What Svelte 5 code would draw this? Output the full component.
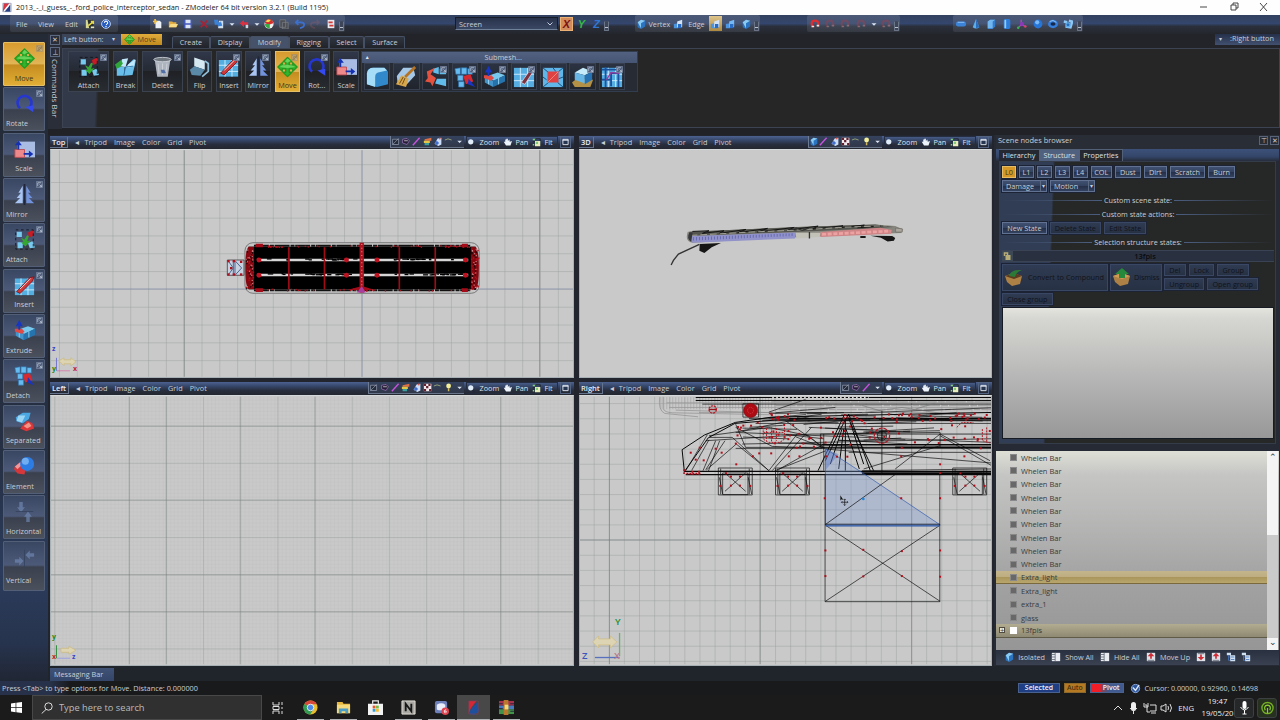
<script>
  const sideTools = [
    { label: 'Move', icon: 'move', active: true, menu: true, center: true },
    { label: 'Rotate', icon: 'rotate', menu: true },
    { label: 'Scale', icon: 'scale', center: true },
    { label: 'Mirror', icon: 'mirror', menu: true },
    { label: 'Attach', icon: 'attach', menu: true },
    { label: 'Insert', icon: 'insert', menu: true, center: true },
    { label: 'Extrude', icon: 'extrude', menu: true },
    { label: 'Detach', icon: 'detach', menu: true },
    { label: 'Separated', icon: 'separated' },
    { label: 'Element', icon: 'element' },
    { label: 'Horizontal', icon: 'horizontal' },
    { label: 'Vertical', icon: 'vertical' }
  ];

  const ribbonTools = [
    { label: 'Attach', icon: 'attach', wide: true, menu: true },
    { label: 'Break', icon: 'break' },
    { label: 'Delete', icon: 'delete', wide: true, menu: true },
    { label: 'Flip', icon: 'flip' },
    { label: 'Insert', icon: 'insert', menu: true },
    { label: 'Mirror', icon: 'mirror', menu: true },
    { label: 'Move', icon: 'move', menu: true, active: true },
    { label: 'Rot...', icon: 'rotate', menu: true },
    { label: 'Scale', icon: 'scale' }
  ];

  const submesh = ['bevel', 'brush', 'bridge', 'detach', 'extrude', 'knife', 'fill', 'box', 'path'];
  const tabs = ['Create', 'Display', 'Modify', 'Rigging', 'Select', 'Surface'];
  const viewMenus = ['Tripod', 'Image', 'Color', 'Grid', 'Pivot'];

  const fileIcons = ['new', 'open', 'save', 'cross', 'import', 'caret', 'export', 'caret', 'ball', 'paste', 'undo', 'redo', 'log'];
  const magnets = ['magnet', 'magnetoff', 'magnetoff', 'magnetoff', 'caret', 'magnetoff'];
  const primitives = ['plate', 'cone', 'cube', 'cylinder', 'joint', 'sphere', 'torus', 'knot'];

  const views = [
    { name: 'Top', icons: ['wire', 'solid', 'line', 'tex', 'drop', 'hook', 'down'] },
    { name: '3D', icons: ['cubes', 'line', 'drop', 'check', 'hook', 'bulb', 'down'] },
    { name: 'Left', icons: ['wire', 'solid', 'line', 'tex', 'drop', 'check', 'hook', 'bulb', 'down'] },
    { name: 'Right', icons: ['wire', 'solid', 'line', 'down'] }
  ];

  const levels = ['L0', 'L1', 'L2', 'L3', 'L4', 'COL', 'Dust', 'Dirt', 'Scratch', 'Burn'];
  const nodes = [
    ...Array(9).fill('Whelen Bar'),
    'Extra_light',
    'Extra_light',
    'extra_1',
    'glass',
    '13fpis'
  ];

  const apps = ['chrome', 'folder', 'store', 'notes', 'discord', 'zmodeler', 'winrar'];

  let seed = 7;
  function rnd(a, b) {
    seed = (seed * 16807) % 2147483647;
    return a + ((seed - 1) / 2147483646) * (b - a);
  }

  function steps(from, to, size) {
    const out = [];
    for (let v = from; v < to; v += size) out.push(v);
    return out;
  }

  function scatter(n, x1, x2, y1, y2) {
    return Array.from({ length: n }, () => [rnd(x1, x2), rnd(y1, y2)]);
  }

  // vertex dots of the light bar, top view
  const barDots = [
    ...scatter(36, 76, 98, 55, 180),
    ...scatter(36, 752, 774, 55, 180),
    ...scatter(28, 100, 750, 45, 50),
    ...scatter(28, 100, 750, 176, 181),
    ...scatter(16, 120, 185, 45, 50),
    ...scatter(16, 660, 735, 45, 50),
    ...scatter(14, 385, 460, 175, 182)
  ];
  const endDots = [...scatter(22, 76, 96, 55, 175), ...scatter(22, 754, 770, 55, 175)];
  const gaps = [...scatter(16, 130, 400, 86, 90), ...scatter(16, 130, 400, 131, 135), ...scatter(16, 500, 720, 87, 90), ...scatter(16, 500, 720, 132, 135)];

  // housing of the light bar, side view
  const hull = [
    ...scatter(32, 470, 740, 110, 200),
    ...scatter(44, 740, 1250, 100, 200)
  ];
  const hullLines = Array.from({ length: 24 }, () => {
    const x = rnd(470, 1050);
    const y = rnd(104, 190);
    return [x, y, x + rnd(90, 220), y + rnd(-14, 14)];
  });
  const roofLines = Array.from({ length: 16 }, () => {
    const x = rnd(570, 1080);
    const y = rnd(94, 124);
    return [x, y, x + rnd(60, 200), y + rnd(-10, 10)];
  });
  const roofDots = scatter(40, 580, 1245, 95, 118);
  const ghostLines = steps(255, 600, 9);
  const brackets = [428, 600, 1133];
  const faceDots = [
    [748, 353], [978, 353], [1095, 353], [750, 510], [864, 508], [980, 512], [1095, 510],
    [750, 587], [864, 588], [980, 587], [1095, 589], [345, 216], [372, 201], [420, 204], [438, 216],
    [360, 237], [384, 239], [482, 251], [532, 227], [551, 218], [587, 218], [640, 227], [672, 227],
    [752, 227], [785, 228], [816, 228], [978, 227], [1095, 251], [1095, 277], [1168, 227]
  ];
</script>

{#snippet glyph(name)}
  <svg class="glyph" viewBox="0 0 24 24">
    {#if name === 'move'}
      <path d="M12 1l5 5h-3v4h4V7l5 5-5 5v-3h-4v4h3l-5 5-5-5h3v-4H6v3l-5-5 5-5v3h4V6H7z" fill="#32b52c" stroke="#249a20" stroke-width="1.500" stroke-linejoin="round" />
      <path d="M12 2l4 3-4 2-3-1zM3 12l4-3 10 1 4 2-9 1z" fill="#8ce879" opacity=".6" />
    {:else if name === 'rotate'}
      <path d="M7 17.500A8 8 0 1 1 18.500 16" fill="none" stroke="#2637d0" stroke-width="3" />
      <path d="M13 16l9-2v8z" fill="#3449ee" />
    {:else if name === 'scale'}
      <path d="M4 3h20v18H4z" fill="#a9bde4" />
      <path d="M1 12h11v9H1z" fill="#ed898a" stroke="#b84850" />
      <path d="M5 12V6M11 17h7" stroke="#1a2fab" stroke-width="2" />
      <path d="M5 2l4 5H1zM17 13v8l5-4z" fill="#1430b5" />
    {:else if name === 'mirror'}
      <path d="M10 2v20H1l6-6H3l5-6H5z" fill="#a8c4f2" />
      <path d="M14 2v20h9l-6-6h4l-5-6h3z" fill="#7292db" />
      <path d="M12 0v24" stroke="#20273b" stroke-width="2" />
    {:else if name === 'attach'}
      <path d="M3 3h6v6H3zM4 15h6v7H4zM16 16l5-2 3 7-6 1z" fill="#77c9ee" />
      <path d="M16 4l6-3 1 6-6 3z" fill="#c91b25" />
      <path d="M8 10l4 2 3-5 2 1-2 6 4-1-6 7-5-5h3z" fill="#36a633" />
      <path d="M2 1h20v22H2z" fill="none" stroke="#10151e" stroke-dasharray="3 3" />
    {:else if name === 'break'}
      <path d="M2 11l9 1-1 10H2zM12 12l9-9 3 1-4 17-10 1z" fill="#69bde9" />
      <path d="M8 3l7-1-3 10-7-1zM15 9l8-6-1 8-8 2z" fill="#c1e9fb" />
      <path d="M0 9l7-5 2 4-3 4-4 2z" fill="#30a63a" />
      <path d="M12 12l-2 10M13 12l8-1" stroke="#2570a8" />
    {:else if name === 'delete'}
      <path d="M3 3h18l-3 20H6z" fill="#aeb4bd" />
      <ellipse cx="12" cy="3.500" rx="10" ry="2.500" fill="#70777f" stroke="#d0d4db" />
      <path d="M7 8l1 12M12 8v13M17 8l-1 12" stroke="#e3e7ed" opacity=".6" />
      <path d="M10 15l4 0 2 4h-5z" fill="#526fa8" />
    {:else if name === 'flip'}
      <path d="M6 1l12 4v10L6 11z" fill="#d6e8f2" />
      <path d="M1 15l5-4 12 4-5 7-10-1z" fill="#5b8aa9" />
      <path d="M18 5l4 3v9l-7 6" fill="none" stroke="#92bfda" stroke-width="2" />
    {:else if name === 'insert'}
      <path d="M1 4h22v19H1z" fill="#54aee0" />
      <path d="M8 4v19M16 4v19M1 10h22M1 17h22" stroke="#d6f2ff" />
      <path d="M3 19L18 3l5-1-2 5L7 21z" fill="#d03737" stroke="#7c1720" />
      <path d="M7 16L19 4" stroke="#eee" />
    {:else if name === 'extrude'}
      <path d="M2 12l14-5 8 3-12 6z" fill="#78c9ed" />
      <path d="M11 16l13-6v7l-13 6z" fill="#2674ae" />
      <path d="M2 12l9 4v7l-9-5z" fill="#4294cb" />
      <path d="M17 13v7M6 14v6" stroke="#9ad4f2" />
      <path d="M1 10h8l3 3-3 3-8-3z" fill="#df4a45" />
      <path d="M5 11V7H2l4-7 4 7H7v4z" fill="#1736c3" />
    {:else if name === 'detach'}
      <path d="M1 3l6-1v7H2zM8 2h6v7H8zM15 3l5 0v6h-5zM4 10h6v6H4zM5 17h6v6H5z" fill="#65baf0" stroke="#2c6fa8" stroke-width=".7" />
      <path d="M10 11l8-2 3 8-8 3z" fill="#d62930" />
      <path d="M16 14l7 9-8-3" fill="#1a35c2" />
    {:else if name === 'separated'}
      <path d="M2 7l8-5 9 0-2 7-7 5-7-2z" fill="#4aa7e1" />
      <path d="M5 5l8 0-4 8-6-2z" fill="#9bd5f6" />
      <path d="M7 20l8-9 6 3 2 6-9 3z" fill="#dc3638" />
      <path d="M11 17l6-4 3 4-5 3z" fill="#f39489" />
    {:else if name === 'element'}
      <path d="M1 12l6-5 7 3-2 11-8-1-4-5z" fill="#d6373b" />
      <path d="M1 12l6-5 2 3-5 5z" fill="#f0989a" />
      <circle cx="15" cy="9" r="8" fill="#2c7ce4" />
      <circle cx="13" cy="6" r="4" fill="#83baf4" opacity=".8" />
    {:else if name === 'horizontal'}
      <path d="M6 1h4v6h2.500L8 13 3.500 7H6zM14 24h4v-6h2.500L16 12l-4.500 6H14z" fill="#718bb6" opacity=".65" />
      <path d="M2 12h20" stroke="#35445f" />
    {:else if name === 'vertical'}
      <path d="M1 14h5v-3l5 5-5 5v-3H1zM23 7h-5V4l-5 5 5 5v-3h5z" fill="#718bb6" opacity=".65" />
      <path d="M12 3v20" stroke="#35445f" />
    {:else if name === 'bevel'}
      <path d="M1 8Q2 2 8 2h12l4 4v14l-12 3-11-3z" fill="#3189cc" />
      <path d="M1 8Q2 2 8 2h12l3 3-10 2q-3 1-3 5v11l-9-3z" fill="#a5ddf8" />
    {:else if name === 'brush'}
      <path d="M2 11l7-9h11l2 8-9 10H3z" fill="#a6c8e8" />
      <path d="M22 1L11 12" stroke="#b47426" stroke-width="3" />
      <path d="M7 10l8 4-3 9-11-3z" fill="#d8a84c" />
      <path d="M5 19l4-7M8 20l3-7" stroke="#684417" />
    {:else if name === 'bridge'}
      <path d="M9 3l6-2v8l-6-2zM16 3l7 0v6h-7zM13 14h10v8l-12-3z" fill="#62bceb" />
      <path d="M2 6l9-4-5 7 6 4-4 9-2-4-6-1 3-4z" fill="#e4523f" />
    {:else if name === 'knife' || name === 'path'}
      <path d="M1 2h22v21H1z" fill="#55ade2" />
      <path d="M8 2v21M16 2v21M1 9h22M1 16h22" stroke="#d1eeff" />
      {#if name === 'knife'}
        <path d="M9 18L21 1l3 2-11 17z" fill="#7b3341" stroke="#eee" stroke-width=".7" />
      {:else}
        <path d="M1 4h22M5 1v22M11 22V8h8v15M1 15h10" stroke="#19529e" stroke-width="2" fill="none" />
        <path d="M6 15l5-8 9 1" stroke="#9b3ca0" fill="none" stroke-width="1.500" />
      {/if}
    {:else if name === 'fill'}
      <path d="M1 2h22v21H1z" fill="#60b6e8" />
      <path d="M1 2l6 5M23 2l-6 5M1 23l6-5M23 23l-6-5M12 2l3 4M1 12l4 3M23 12l-5 2" stroke="#134d7c" />
      <path d="M6 6h12v12H6z" fill="#e04142" />
      <path d="M6 18L18 6" stroke="#f28e82" />
    {:else if name === 'box'}
      <path d="M0 18l5-4 18 1-3 8H3z" fill="#b29046" />
      <path d="M3 7l9-5 10 4-8 4z" fill="#c5ebfb" />
      <path d="M3 7l11 3v9L3 15z" fill="#68b6e5" />
      <path d="M14 10l8-4v9l-8 5z" fill="#2571b2" />
    {/if}
  </svg>
{/snippet}

{#snippet mini(name)}
  <svg class="mini" viewBox="0 0 12 12">
    {#if name === 'new'}
      <path d="M3 2h5l2 2v7H3z" fill="#ecf2f8" /><path d="M0 3h5M2.500 0v6" stroke="#f4c24b" stroke-width="2" />
    {:else if name === 'open'}
      <path d="M1 3h4l1 1h4v6H1z" fill="#e2ad42" /><path d="M3 6h9l-2 4H1z" fill="#f9db83" />
    {:else if name === 'save'}
      <path d="M1 1h10v10H1z" fill="#4356b9" /><path d="M3 1h6v4H3zM3 7h6v4H3z" fill="#dce4f4" />
    {:else if name === 'cross'}
      <path d="M2 2l8 8M10 2L2 10" stroke="#a52334" stroke-width="2" />
    {:else if name === 'import'}
      <path d="M6 2h5v9H5V8z" fill="#cfddec" /><path d="M0 1h5v3h3V2l2 6-6 1 1-2H1z" fill="#3b83d8" />
    {:else if name === 'export'}
      <path d="M1 5l5-4v3h5v5H8V7H6v3z" fill="#dc3140" /><path d="M8 7h3v4H8z" fill="#ccd7e5" />
    {:else if name === 'ball'}
      <circle cx="6" cy="6" r="5.500" fill="#eee" /><path d="M1 5a5 5 0 0 1 10 0L6 7z" fill="#d3312f" /><path d="M1 6l6 0v5a5 5 0 0 1-6-5" fill="#36ac43" /><path d="M2 3q3-4 6-1L5 4z" fill="#f7df54" />
    {:else if name === 'paste'}
      <path d="M1 1h7v9H1zM4 4h7v8H4z" fill="#4b4d52" stroke="#777b83" />
    {:else if name === 'undo'}
      <path d="M1 4h6q4 0 4 3t-5 4M4 1L1 4l3 3" fill="none" stroke="#3c70cf" stroke-width="2" />
    {:else if name === 'redo'}
      <path class="off" d="M11 4H5Q1 4 1 7t5 4M8 1l3 3-3 3" fill="none" stroke="#b0606a" stroke-width="2" />
    {:else if name === 'log'}
      <path d="M2 1h8v10H2z" fill="#e6e9f0" /><path d="M3 4h5M4 8h5" stroke="#d03c35" stroke-width="2" />
    {:else if name === 'caret' || name === 'down'}
      <path d="M3 5h6L6 8z" fill="#dce4f2" />
    {:else if name === 'exit'}
      <path d="M1 1h7v10H1z" fill="#d7d992" /><path d="M3 1h7v10H5z" fill="#2a3031" /><path d="M4 8l5-4M7 3h3v3" stroke="#e8db4b" fill="none" stroke-width="1.800" /><path d="M7 9h4v2H7z" fill="#e3e7c4" />
    {:else if name === 'help'}
      <circle cx="6" cy="6" r="5.300" fill="#245cc2" stroke="#d0e1fc" /><path d="M4 4.500q.5-2 2-2t2 1.500-2 3" stroke="#fff" fill="none" stroke-width="1.300" /><circle cx="6" cy="9" r=".8" fill="#fff" />
    {:else if name === 'magnet' || name === 'magnetoff'}
      <path class:off={name === 'magnetoff'} d="M3 10L2 6q0-4 4-4t4 4v3" fill="none" stroke="#da2f33" stroke-width="2.700" />
      <path class:off={name === 'magnetoff'} d="M2 9h3M8 8h3" stroke="#f1e6e6" stroke-width="2" />
    {:else if name === 'plate'}
      <rect x="0" y="3" width="12" height="6" rx="2.500" fill="#3b84da" /><path d="M2 4h8" stroke="#93c5f6" />
    {:else if name === 'cone'}
      <path d="M6 0l4 10q-4 3-8 0z" fill="#5caeea" /><path d="M6 0l4 10-4 1z" fill="#2b6dbb" />
    {:else if name === 'cube'}
      <path d="M2 3l3-2h6v8l-3 3H2z" fill="#337bcb" /><path d="M2 3l3-2h6L8 3v8H2z" fill="#72b6f0" />
    {:else if name === 'cylinder'}
      <rect x="2" y="0" width="8" height="12" rx="2" fill="#2d7dda" /><path d="M4 1v10" stroke="#9accfa" stroke-width="2" />
    {:else if name === 'joint'}
      <path d="M5 1v6l-4 4M5 7l6 2" stroke="#b24dbf" stroke-width="1.500" fill="none" /><circle cx="6" cy="6" r="2.500" fill="#8b38ba" /><circle cx="1.500" cy="10.500" r="1.500" fill="#32b551" /><circle cx="10" cy="9" r="1.500" fill="#d84564" />
    {:else if name === 'sphere'}
      <circle cx="6" cy="6" r="5.300" fill="#2875d8" /><circle cx="5" cy="4" r="2.500" fill="#7ab9f6" />
    {:else if name === 'torus'}
      <ellipse cx="6" cy="6" rx="4.500" ry="3.500" fill="#17294b" stroke="#367edb" stroke-width="3" /><path d="M2 3q4-3 8 1" stroke="#9bcbf6" fill="none" />
    {:else if name === 'knot'}
      <path d="M1 3l4 1M3 9l6 1 2-7-4-1" stroke="#8cc7f5" stroke-width="3" fill="none" /><circle cx="6" cy="7" r="2.500" fill="#276bbb" stroke="#60adeb" stroke-width="1.500" />
    {:else if name === 'points' || name === 'faces'}
      <path d="M1 6l5-1v6H1z" fill="#4b94e0" /><path d="M5 3l6-2v9H5z" fill={name === 'faces' ? '#74b9f5' : '#d2e2f4'} /><path d="M6 6h4v5H6z" fill="#276bc4" />
    {:else if name === 'solidcube' || name === 'cubes'}
      <path d="M2 4l4-3 5 1v7l-5 3-4-2z" fill="#2b74c2" /><path d="M2 4l4-3 5 1-5 3v6z" fill="#8bcaf1" />
    {:else if name === 'wire'}
      <path d="M2 3h8v7H2zM2 10l8-8" fill="#242b3a" stroke="#aab4c8" stroke-width=".8" />
    {:else if name === 'solid'}
      <path d="M2 3l6-1 3 3-3 5-6-2z" fill="#251c36" stroke="#a479c2" stroke-width=".9" /><path d="M4 5h5" stroke="#ddd" />
    {:else if name === 'line'}
      <path d="M1 11L10 1" stroke="#c752dd" stroke-width="1.800" />
    {:else if name === 'tex'}
      <path d="M2 3l9-2v4H2z" fill="#df7044" /><path d="M1 5h8v3H1z" fill="#e1c647" /><path d="M2 8h6v3H2z" fill="#3b9e9b" />
    {:else if name === 'drop'}
      <path d="M6 2l5-1v9l-4 2-5-3z" fill="#cddcf8" /><path d="M5 5l3 3-3 3-3-3z" fill="#426fcb" /><circle cx="9" cy="2" r="1.200" fill="#de5548" />
    {:else if name === 'hook'}
      <path d="M1 4q4-3 9 0" stroke="#949d75" fill="none" stroke-width="1.300" />
    {:else if name === 'check'}
      <path d="M1 1h10v10H1z" fill="#f1e9ee" /><path d="M1 1h3v3H1zM7 1h3v3H7zM4 4h3v3H4zM1 8h3v3H1zM8 8h3v3H8z" fill="#62212f" />
    {:else if name === 'bulb'}
      <circle cx="6" cy="4" r="3.200" fill="#f4f09a" /><path d="M5 7h2v4H5z" fill="#d4b95c" />
    {:else if name === 'lens'}
      <path d="M6 7l4 4" stroke="#222838" stroke-width="2" /><circle cx="5" cy="5" r="3.500" fill="#e0ecf8" />
    {:else if name === 'hand'}
      <path d="M1 5l2 0 0-3h1.500l0 2 0-3h2v3l2-2 .5 3 3-1-2 6H4z" fill="#edf3fa" />
    {:else if name === 'fit'}
      <path d="M4 4h7v7H4z" fill="#e6ecbc" /><path d="M1 1h3v2H1zM1 8h2v2H1zM5 5h3v3H5z" fill="#81cb79" /><path d="M5 1h6v3M1 5h3" stroke="#1a1d1c" fill="none" />
    {:else if name === 'max'}
      <path d="M1.500 1.500h9v9h-9zM1 3h10" fill="#273650" stroke="#e8eef8" stroke-width="1.500" />
    {:else if name === 'page'}
      <path d="M1 1h10v10H1z" fill="#e9edf2" /><path d="M1 3h4M1 6h4M1 9h4M5 1v10" stroke="#666d78" />
    {:else if name === 'up' || name === 'dn' || name === 'top'}
      <path d="M1 1h10v10H1z" fill="#dde1e8" /><path d={name === 'dn' ? 'M6 10L2 6h3V3h2v3h3z' : 'M6 1L2 5h3v3h2V5h3z'} fill="#cf2c36" /><path d={name === 'dn' ? 'M2 2h8' : 'M2 10h8'} stroke="#5a6270" />
    {:else if name === 'tree'}
      <path d="M1 1h5v3H1zM5 4h6v7H5z" fill="#d1e1f4" /><path d="M3 4v6h2M3 6h2M6 6h4M6 9h4" stroke="#4676be" fill="none" />
    {/if}
  </svg>
{/snippet}

{#snippet dots(list, size, fill = '#b0101c')}
  {#each list as [x, y]}
    <rect {x} {y} width={size} height={size} {fill} stroke="none" />
  {/each}
{/snippet}

{#snippet corner()}
  <svg class="corner" viewBox="0 0 8 8"><path d="M.5.5h7v7h-7z" fill="#4a5977" stroke="#7f8da6" stroke-width=".8" /><path d="M2 6V2h4M4 4l2.500 2.500M6.500 4v2.500H4" fill="none" stroke="#ccd4e0" stroke-width=".8" /></svg>
{/snippet}

{#snippet topScene()}
  <svg class="scene" viewBox="50 150 523 227">
    {#each steps(58.5, 573, 17.85) as x}<path d="M{x} 150V377" class="grid" />{/each}
    {#each steps(164.5, 377, 17.85) as y}<path d="M50 {y}H573" class="grid" />{/each}
    <path d="M183.500 150V377M539.500 150V377" class="major" />
    <path d="M361.500 150V377M50 289H573" stroke="#858dab" stroke-width=".7" />
    <g transform="translate(220 230) scale(.33333)">
      <rect x="73" y="38" width="704" height="152" rx="24" fill="#c7c7c7" stroke="#777" stroke-width="3" />
      <rect x="84" y="50" width="682" height="128" fill="#000" />
      <path d="M100 47H750M100 181H750" stroke="#111" stroke-width="6" stroke-dasharray="45 3 12 2" />
      <path d="M110 90H744M110 135H744" stroke="#d5d5d5" stroke-width="7" />
      {#each gaps as [x, y]}<path d="M{x} {y}h{x % 13 + 5}" stroke="#000" stroke-width="4" />{/each}
      <path d="M84 50q-10 8-10 64t10 64h16V50zM766 50q10 8 10 64t-10 64h-14V50z" fill="#850811" />
      <path d="M205 52v126M312 52v126M537 52v126M645 52v126" stroke="#a00c16" stroke-width="5" />
      <path d="M424 38v150" stroke="#aa1420" stroke-width="13" />
      <path d="M424 42v140" stroke="#d17777" stroke-width="4" stroke-dasharray="3 8" />
      {#each [115, 378, 470, 736] as cx}
        <circle {cx} cy="90" r="7.500" fill="#bd1220" /><circle {cx} cy="136" r="7.500" fill="#bd1220" />
      {/each}
      {@render dots(barDots, 4)}
      {@render dots(endDots, 3, '#d9a3a5')}
      {@render dots(endDots.map(([x, y]) => [x - 2, y + 5]), 4, '#1c0406')}
      <path d="M105 41h22v11h-22zM105 175h22v11h-22zM725 41h18v11h-18zM725 175h18v11h-18zM380 180l45-12 38 12z" fill="#a30c18" />
      <path d="M20 90h50v46H20z" fill="#c7d1df" stroke="#222" stroke-width="2" />
      <path d="M22 92l16 22-16 22M38 92v44M43 92l20 22-20 22z" fill="none" stroke="#4d658f" stroke-width="3" />
      {@render dots([[20, 90], [36, 90], [20, 130], [36, 130], [28, 111], [58, 92], [58, 130]], 7)}
      <path d="M410 188l14-20 12 20z" fill="#a83d9f" />
    </g>
    <path d="M55.500 358v13" stroke="#7477cc" /><path d="M56 371h13" stroke="#d28" opacity=".4" />
    <path d="M58 361l5-3v2h7v-2l5 4-5 4v-2h-7v2z" class="gizmo" />
    <text x="51" y="351" fill="#3545c8">z</text><text x="51" y="371" fill="#168a24">y</text><text x="72" y="371" fill="#c02530">x</text>
  </svg>
{/snippet}

{#snippet perspectiveScene()}
  <svg class="scene" viewBox="579 150 412 227">
    <g transform="translate(640 130) scale(.33333)">
      <path d="M145 305l320-14 240-8 60 5 24 10-6 11-78 3-320 13-230 13q-24-3-14-33z" fill="#86867e" />
      <path d="M146 305l330-14 229-8 55 8-80 5-205 9-330 13z" fill="#55554f" />
      <path d="M154 318l310-11v18l-310 13z" fill="#9092c9" />
      <path d="M157 329l305-14M157 324l305-12" stroke="#5359a7" stroke-width="5" stroke-dasharray="2 7" />
      <path d="M540 306l180-13 35 7-3 11-212 10z" fill="#cf8587" />
      <path d="M545 313l205-10" stroke="#eda2a2" stroke-width="8" stroke-dasharray="12 5" />
      <path d="M155 304l50-2-20 8 65-8-14 8 80-12-25 10 90-13-30 11 110-14-18 8 90-12-18 9 93-10-15 6 79-8-20 8 70-5" stroke="#151515" stroke-width="3" fill="none" />
      <path d="M150 316l180-10 140-6 150-9 120-4" stroke="#a1a196" stroke-width="3" fill="none" stroke-dasharray="20 9" />
      <path d="M465 308h75l-2 13-70 4z" fill="#c2c2b9" /><path d="M507 306v19M465 293l20 8 20-7" stroke="#333" stroke-width="4" fill="none" />
      <path d="M766 294l20 2v10h-20z" fill="#aaa69e" stroke="#6b6860" stroke-width="2" />
      <path d="M146 307q-10 18 5 28l5-28z" fill="#35373b" /><path d="M177 342l64-3-28 13-22 17-15-7z" fill="#161616" />
      <path d="M176 343l-63 29-15 19-7 14" fill="none" stroke="#333" stroke-width="4" />
      <path d="M690 317l66 1 9 6-4 8-19 2-20-11zM660 318h16v6h-16z" fill="#171717" />
    </g>
  </svg>
{/snippet}

{#snippet leftScene()}
  <svg class="scene" viewBox="50 396 523 268">
    {#each steps(50.5, 573, 3.73) as x}<path d="M{x} 396V664" class="fine" />{/each}
    {#each steps(399.5, 664, 3.73) as y}<path d="M50 {y}H573" class="fine" />{/each}
    {#each steps(53.8, 573, 37.25) as x}<path d="M{x} 396V664" class="grid" />{/each}
    {#each steps(425.4, 664, 37.2) as y}<path d="M50 {y}H573" class="grid" />{/each}
    <path d="M128.500 396V664M165.500 396V664M239.500 396V664M314.500 396V664M500.500 396V664M50 425.500H573M50 499.500H573M50 574.500H573M50 611.500H573" class="major thin" />
    <path d="M55.500 645v13" stroke="#359043" /><path d="M56 658h13" stroke="#9ba0df" />
    <path d="M60 648h8v-2l7 4-7 4v-2h-8z" class="gizmo" />
    <text x="51" y="639" fill="#168a24">y</text><text x="51" y="659" fill="#c02530">x</text><text x="71" y="659" fill="#3545c8">z</text>
  </svg>
{/snippet}

{#snippet rightScene()}
  <svg class="scene" viewBox="579 396 412 268">
    {#each steps(593.2, 991, 15.15) as x}<path d="M{x} 396V664" class="grid" />{/each}
    {#each steps(402.8, 664, 15.2) as y}<path d="M579 {y}H991" class="grid" />{/each}
    <path d="M608.500 396V664M759.500 396V664M911.500 396V664M579 539.500H991" class="major" />
    <g transform="translate(575 380) scale(.33333)" fill="none" stroke="#080808" stroke-width="2">
      <path d="M252 48q-6 40 15 50l100 10M262 48v35q4 12 28 13l300 6M272 66h980M280 80h970M370 95h880M300 88l300 8" stroke="#8d8d8d" />
      {#each ghostLines as x}<path d="M{x} 49v36" stroke="#999" stroke-width="1.500" />{/each}
      <path d="M590 64h660M600 74h650M610 86h640" stroke="#a2a2a2" stroke-width="5" stroke-dasharray="60 4 20 3" />
      <path d="M360 50h890M360 59h890" stroke-width="3" /><path d="M590 50h290" stroke="#ddd" stroke-width="4" stroke-dasharray="5 7" />
      <path d="M580 94l110-38M600 96l180-16M380 70h870M580 98l310-3 360-14" />
      <path d="M840 68l120 35 120-36M860 96l120-16 120 18" stroke="#777" />
      <path d="M326 275l-7-68 67-44 93-38 110-16 660-14M328 270l70-99 80-43 120-10h650" stroke-width="3" />
      <path d="M400 170h70l110 100M395 162l-65 108M400 177l-52 92M420 180l-38 90M432 180l-34 92M448 180l-58 87M482 190l-90 78M482 190l98 80M580 270l85-110M590 270l118-130M610 266l138-77M598 270l154-60" />
      <path d="M400 165l180-25 120 25 45 40M480 140l110 57 150 6M480 130l30 70h720M390 180l320-20h540M480 155l770 30M500 190l750-16M580 112h670M560 120h690M540 128h710M500 150l200-42M630 120l115 80M660 168l90 35M480 203h770M745 160v110M735 160v40h360v-45zM920 90v190" />
      {#each [...hullLines, ...roofLines] as [x1, y1, x2, y2]}<path d="M{x1} {y1}L{x2} {y2}" />{/each}
      <path d="M740 192h510M960 200h290M640 114h610" stroke-width="5" />
      <path d="M750 240l45-95 25-45 30 75 35 95M765 250l35-105M790 265l15-120M810 270V120M852 265l-40-120M865 250l-45-140M895 270l-68-140M728 270l80-170" stroke-width="3" />
      <path d="M750 205l500 42M820 215h430M960 265l135-105 150 80M1095 165l155 90M860 270l390-5M865 265l230-70" />
      <path d="M326 272h924M330 282h920" stroke-width="4" />
      <path d="M860 278h390" stroke-width="7" />
      <path d="M750 204l115 75 230 154H750z" fill="rgba(125,155,215,.35)" stroke="#2e58ad" />
      <path d="M750 204v65l40-48z" fill="rgba(65,100,190,.35)" stroke="none" />
      <path d="M749 280v384h345V275M750 434l345 229M750 663l345-229M750 432L962 280M750 431h344" />
      <path d="M750 436h344" stroke="#2857aa" stroke-width="4" />
      {#each brackets as x}
        <path d="M{x} 262h102v81H{x}zM{x + 7} 264v77M{x + 13} 277h76v65h-76zM{x + 93} 264v77M{x + 20} 277l62 55M{x + 20} 332l62-55M{x} 272h102M{x + 3} 290l10 50M{x + 90} 290l10 50" />
        {@render dots([[x + 35, 285], [x + 62, 285], [x + 35, 312], [x + 62, 312], [x + 3, 313], [x + 93, 313], [x + 20, 275]], 6)}
      {/each}
      {@render dots(hull, 6)}
      {@render dots(roofDots, 6)}
      {@render dots(faceDots.map(([x, y]) => [x - 3, y - 3]), 6)}
      <path d="M502 69h47v40h-47z" />
      <circle cx="525" cy="89" r="21" fill="#ae0c15" stroke="#7e0a10" /><circle cx="525" cy="89" r="9" stroke="#e15b5b" stroke-dasharray="3 3" />
      <circle cx="411" cy="86" r="11" stroke="#b3202b" stroke-width="4" stroke-dasharray="7 2" /><path d="M400 86h22" stroke="#9b111a" stroke-width="4" />
      <circle cx="920" cy="165" r="23" stroke="#a81e29" stroke-width="4" stroke-dasharray="12 2" /><circle cx="920" cy="165" r="14" stroke="#111" /><path d="M906 165h28M920 151v28" />
      <path d="M563 140v35l15 10h35l14-10v-35M573 142v38M588 140v43M603 142v38M564 155h60" stroke="#a81e29" stroke-width="3" stroke-dasharray="6 3" />
      <path d="M1145 140l15-15h35M1222 145v35l28 8M1235 140v42" stroke="#a81e29" stroke-width="3" stroke-dasharray="6 3" />
      <path d="M325 266v14M332 279h42M350 270v12M370 270v12" stroke="#b31220" stroke-width="5" stroke-dasharray="6 3" />
      <circle cx="864" cy="355" r="4" fill="#2383d5" stroke="none" />
      <path d="M795 344v16l4-4 5 2z" fill="#111" stroke="none" />
      <path d="M808 356v18M799 365h18M805 358l3-3 3 3M805 372l3 3 3-3M801 362l-3 3 3 3M815 362l3 3-3 3" />
      <path d="M50 785l18-18v9h35v-9l20 18-20 18v-9H68v9z" class="gizmo large-gizmo" />
      <path d="M131 758v70" stroke="#6faf73" stroke-width="4" /><path d="M57 832h74" stroke="#5870bd" stroke-width="4" />
    </g>
    <text class="big" x="614" y="625" fill="#1d8b2d">Y</text><text class="big" x="581" y="659" fill="#3c55bb">Z</text><text class="big" x="613" y="659" fill="#b97a85">X</text>
  </svg>
{/snippet}

<div class="app">
  <header class="titlebar">
    <svg class="logo" viewBox="0 0 12 12"><path d="M2 1h7L4 7l-3 4z" fill="#d73642" /><path d="M10 2v9H3l5-6z" fill="#263f83" /><path d="M1 1h10v10H1z" fill="none" stroke="#5c6d98" stroke-width=".6" /></svg>
    <span>2013_-_i_guess_-_ford_police_interceptor_sedan - ZModeler 64 bit version 3.2.1 (Build 1195)</span>
    <svg class="window-buttons" viewBox="0 0 70 10"><path d="M0 5h7M31 3h5v5h-5zM33 3V1h5v5h-2M60 1l7 8M67 1l-7 8" fill="none" stroke="#333" stroke-width=".9" /></svg>
  </header>

  <div class="toolbar">
    <div class="menus"><span>File</span><span>View</span><span>Edit</span>{@render mini('exit')}{@render mini('help')}</div>
    <div class="strip">{#each fileIcons as name}<i class:narrow={name === 'caret'}>{@render mini(name)}</i>{/each}<b></b></div>
    <div class="axis">
      <div class="combo">Screen<svg viewBox="0 0 6 4"><path d="M.5.5L3 3 5.500.5" fill="none" stroke="#c5cede" /></svg></div>
      <i class="x">X</i><i class="y">Y</i><i class="z">Z</i><b></b>
    </div>
    <div class="strip modes"><i class="slim">{@render mini('solidcube')}</i><span>Vertex</span><i>{@render mini('points')}</i><span>Edge</span><i class="on">{@render mini('points')}</i><i>{@render mini('faces')}</i><i>{@render mini('solidcube')}</i><b></b></div>
    <div class="strip">{#each magnets as name}<i class:narrow={name === 'caret'}>{@render mini(name)}</i>{/each}<b></b></div>
    <div class="strip">{#each primitives as name}<i>{@render mini(name)}</i>{/each}<b></b></div>
  </div>

  <div class="body">
    <aside class="sidebar">
      {#each sideTools as tool}
        <button class="tool" class:active={tool.active} class:center={tool.center}>
          {@render glyph(tool.icon)}
          <span>{tool.label}</span>
          {#if tool.menu}{@render corner()}{/if}
        </button>
      {/each}
    </aside>

    <div class="main">
      <section class="ribbon">
        <div class="grip"><em>✕</em><em>⊣</em><span>Commands Bar</span></div>
        <div class="commands">
          <div class="tabs">
            <div class="left-button"><span>Left button:</span><i>▾</i><strong>{@render glyph('move')}Move</strong></div>
            {#each tabs as tab}<span class="tab" class:current={tab === 'Modify'}>{tab}</span>{/each}
            <span class="right-button"><i>▾</i>:Right button</span>
          </div>
          <div class="panel">
            {#each ribbonTools as tool}
              <button class="command" class:wide={tool.wide} class:active={tool.active}>
                {@render glyph(tool.icon)}
                <span>{tool.label}</span>
                {#if tool.menu}{@render corner()}{/if}
              </button>
            {/each}
            <div class="submesh">
              <div class="submesh-title">Submesh...</div>
              <div class="submesh-icons">
                {#each submesh as name, i}<i>{@render glyph(name)}{#if i > 1 && i !== 6}{@render corner()}{/if}</i>{/each}
              </div>
            </div>
          </div>
        </div>
      </section>

      <div class="workspace">
        <div class="views">
          {#each views as view}
            <section class="view">
              <div class="view-bar">
                <strong>{view.name}</strong><em>◂</em>
                {#each viewMenus as item}<span>{item}</span>{/each}
                <div class="modes-box">{#each view.icons as name}{@render mini(name)}{/each}</div>
                <div class="nav">{@render mini('lens')}<span>Zoom</span>{@render mini('hand')}<span>Pan</span>{@render mini('fit')}<span>Fit</span></div>
                <div class="max">{@render mini('max')}</div>
              </div>
              {#if view.name === 'Top'}{@render topScene()}
              {:else if view.name === '3D'}{@render perspectiveScene()}
              {:else if view.name === 'Left'}{@render leftScene()}
              {:else}{@render rightScene()}{/if}
            </section>
          {/each}
        </div>

        <aside class="browser">
          <div class="browser-title">Scene nodes browser<em>⊤</em><em>✕</em></div>
          <div class="browser-tabs"><span>Hierarchy</span><span class="current">Structure</span><span>Properties</span></div>
          <div class="structure">
            <div class="buttons levels">{#each levels as level}<button class:active={level === 'L0'} class:long={level.length > 3}>{level}</button>{/each}</div>
            <div class="buttons drops"><button>Damage <i>▾</i></button><button>Motion <i>▾</i></button></div>
            <div class="rule">Custom scene state:</div>
            <div class="rule">Custom state actions:</div>
            <div class="buttons states"><button>New State</button><button disabled>Delete State</button><button disabled>Edit State</button></div>
            <div class="rule">Selection structure states:</div>
            <div class="owner">
              <svg viewBox="0 0 10 10"><path d="M2 5V2h3v2" fill="none" stroke="#b6ac77" stroke-width="1.500" /><path d="M3 4h5v5H3z" fill="#b6ac77" /></svg>
              <span>13fpis</span>
            </div>
            <div class="group-actions">
              <button class="large convert" disabled>
                <svg viewBox="0 0 20 18"><path d="M1 8l8-3 9 3-2 8-8 2-5-4z" fill="#ad8145" /><path d="M1 8l9 3 8-3-8-3z" fill="#5b3b20" /><path d="M5 8q2-7 13-6-6 2-7 7z" fill="#2b7936" /></svg>
                Convert to Compound
              </button>
              <button class="large" disabled>
                <svg viewBox="0 0 20 18"><path d="M1 8l8-3 9 3-2 8-8 2-5-4z" fill="#ad8145" /><path d="M1 8l9 3 8-3-8-3z" fill="#d09c54" /><path d="M10 0l7 6h-4v4H7V6H3z" fill="#26883a" /></svg>
                Dismiss
              </button>
              <div class="small-actions">
                <button disabled>Del</button><button disabled>Lock</button><button disabled class="group">Group</button>
                <button disabled>Ungroup</button><button disabled>Open group</button>
              </div>
            </div>
            <div class="buttons close"><button disabled>Close group</button></div>
            <div class="state-list"></div>
          </div>
          <div class="tree">
            <ul>
              {#each nodes as node, i}
                <li class:selected={i === 9} class:root={i === 13}><u>{i === 13 ? '+' : ''}</u><i></i>{node}</li>
              {/each}
            </ul>
            <div class="scrollbar"><span>⌃</span><div></div><span>⌄</span></div>
          </div>
          <div class="tree-bar">
            {@render mini('solidcube')}<span>Isolated</span>{@render mini('page')}<span>Show All</span>{@render mini('page')}<span>Hide All</span>{@render mini('up')}<span>Move Up</span>
            {#each ['dn', 'top', 'tree', 'tree'] as name}{@render mini(name)}{/each}
          </div>
        </aside>
      </div>
      <div class="messages"><span>Messaging Bar</span></div>
    </div>
  </div>

  <footer class="status">
    <span>Press &lt;Tab&gt; to type options for Move. Distance: 0.000000</span>
    <div class="flags"><b class="sel">Selected</b><b class="auto">Auto</b><b class="pivot">Pivot</b>
      <svg viewBox="0 0 12 12"><circle cx="6" cy="6" r="4.500" fill="#2d5599" stroke="#92afe2" /><path d="M3 5l3 3 4-6" stroke="#dce8fb" fill="none" stroke-width="1.500" /></svg>
      <span>Cursor: 0.00000, 0.92960, 0.14698</span></div>
  </footer>

  <nav class="taskbar">
    <div class="start"><svg viewBox="0 0 12 12"><path d="M0 1.500l5-.7v4.700H0zM5.800.7L12 0v5.500H5.800zM0 6.300h5v4.800l-5-.7zM5.800 6.300H12V12l-6.200-.8z" fill="#fff" /></svg></div>
    <div class="search"><svg viewBox="0 0 12 12"><circle cx="7.500" cy="4.500" r="3.700" fill="none" stroke="#ddd" /><path d="M5 7.500L.7 11.500" stroke="#ddd" /></svg>Type here to search</div>
    <div class="task-view"><svg viewBox="0 0 12 12"><path d="M1 0v3h6V0M1 12V9h6v3M1 4.500h6v3H1zM10 0v3M10 5v2M10 9v3" fill="none" stroke="#ddd" /></svg></div>
    {#each apps as app}
      <div class="app-button" class:open={app !== 'store'} class:focused={app === 'zmodeler'}>
        <svg viewBox="0 0 16 16">
          {#if app === 'chrome'}
            <circle cx="8" cy="8" r="7.500" fill="#e9bd30" /><path d="M8 8L1.500 4.200A7.500 7.500 0 0 1 14.700 4.500H8z" fill="#d9473b" /><path d="M8 8L1.500 4.200A7.500 7.500 0 0 0 7.500 15.500l4-6z" fill="#349b52" /><circle cx="8" cy="8" r="3.500" fill="#4d8be7" stroke="#eee" />
          {:else if app === 'folder'}
            <path d="M1 2h6l1 2h7v10H1z" fill="#e7b83d" /><path d="M1 5h14v9H1z" fill="#f5db7d" /><path d="M3 14V9h10v5h-3v-2H6v2z" fill="#4a9ec8" />
          {:else if app === 'store'}
            <path d="M5 4V1h6v3" fill="none" stroke="#eee" stroke-width="1.300" /><path d="M0 4h16v12H0z" fill="#f2f2f2" /><path d="M5 6h3v3H5z" fill="#e6552d" /><path d="M8.500 6h3v3h-3z" fill="#79b843" /><path d="M5 9.500h3v3H5z" fill="#2f9ddb" /><path d="M8.500 9.500h3v3h-3z" fill="#f2bd34" />
          {:else if app === 'notes'}
            <path d="M1 1h14v14H1z" fill="#aaa9a3" stroke="#e5e2d8" /><path d="M5 12V4l6 8V4" fill="none" stroke="#171717" stroke-width="2" />
          {:else if app === 'discord'}
            <rect width="13" height="13" x="1" y="1" rx="2" fill="#6e80b9" /><path d="M3 5q5-3 9 0v5q-5 2-9 0z" fill="#e9edfa" /><circle cx="12" cy="12" r="4" fill="#df424d" /><path d="M13 10q-3 1-2 3t2 0-2-1" stroke="#fff" fill="none" stroke-width=".8" />
          {:else if app === 'zmodeler'}
            <path d="M3 1h8L5 9l-2 6z" fill="#d42738" /><path d="M12 2l2 10-5 4-6-1 2-5z" fill="#1e4f9c" /><path d="M3 1h10v14H3z" fill="none" stroke="#7e4055" stroke-width=".7" />
          {:else}
            <path d="M0 1h16v5H0z" fill="#a83150" /><path d="M0 6h16v4H0z" fill="#467bc4" /><path d="M0 10h16v5H0z" fill="#42924c" /><path d="M5 0h5v16H5z" fill="#b8792f" /><path d="M6 5h4v5H6z" fill="#f2db76" /><path d="M0 4h4M12 4h4M0 9h4M12 12h4" stroke="#242638" />
          {/if}
        </svg>
      </div>
    {/each}
    <div class="tray">
      <svg class="tray-icons" viewBox="0 0 60 12"><path d="M1 8l4-4 4 4" fill="none" stroke="#ddd" /><rect x="18" y="0" width="5" height="9" rx="2.500" fill="#eee" /><path d="M17 6q3.500 5 7 0M20.500 8v4M32 3h2v7h3M31 1v4h4V1M37 3h6v6h-6M38 11h5M48 4h2l3-2v8l-3-2h-2zM55 4q1 2 0 4M57 2q3 4 0 8" fill="none" stroke="#ddd" /></svg>
      <span>ENG</span>
      <div class="clock"><span>19:47</span><span>19/05/20</span></div>
      <i><svg viewBox="0 0 12 14"><rect x="4" y="0" width="4" height="8" rx="2" fill="#fff" /><path d="M2 6q4 6 8 0M6 9v4M4 13h4" fill="none" stroke="#fff" /></svg></i>
      <i class="cast"><svg viewBox="0 0 14 14"><circle cx="7" cy="7" r="6" fill="none" stroke="#74ad25" stroke-width="1.500" /><path d="M4.500 9.500q-2-5 2.500-5.500 4.500.5 2.500 5.500M7 7v6" fill="none" stroke="#8bce2d" stroke-width="1.300" /></svg></i>
    </div>
  </nav>
</div>

<style>
  :global(body) { margin: 0; overflow: hidden; background: #202124; }

  .app {
    width: 1280px;
    height: 720px;
    display: grid;
    grid-template-rows: 15px 19px 647px 14px 25px;
    overflow: hidden;
    background: #202228;
    color: #c9ced6;
    font-family: "Open Sans", "Noto Sans", sans-serif;
    font-size: 7.250px;
    line-height: 10px;
    white-space: nowrap;
  }

  .app * { box-sizing: border-box; }
  button { font: inherit; color: inherit; border: 0; margin: 0; padding: 0; background: none; }
  i, em { font-style: normal; }
  svg { display: block; flex: none; }
  .off { opacity: .25; }

  /* Window title and main toolbar */
  .titlebar { display: flex; align-items: center; gap: 4px; padding: 0 0 1px 2px; background: #fdfefd; color: #222; font-size: 7.400px; }
  .logo { width: 10px; height: 11px; }
  .window-buttons { width: 70px; height: 10px; margin-left: auto; margin-right: 10px; }

  .toolbar {
    display: grid;
    grid-template-columns: 140px 305px 180px 172px 146px 1fr;
    padding-left: 10px;
    background: linear-gradient(#33415f 0, #34466d 45%, #2a2f3b 60%, #24262c);
  }
  .menus, .strip, .axis { display: flex; align-items: center; height: 17px; border-radius: 2px; }
  .menus, .strip { background: linear-gradient(rgba(120, 133, 160, .35), rgba(90, 95, 105, .3)); }
  .menus { width: 108px; padding-left: 6px; }
  .menus span:nth-child(1) { width: 22px; }
  .menus span:nth-child(2) { width: 27px; }
  .menus span:nth-child(3) { width: 20px; }
  .menus .mini { margin-right: 6px; }
  .menus .mini:last-child { margin-right: 0; }
  .mini { width: 10px; height: 10px; }
  .strip { width: max-content; }
  .strip i { width: 15.400px; display: grid; place-items: center; }
  .strip i.narrow { width: 9.500px; }
  .toolbar b { width: 5px; height: 10px; margin: 4px 1px 0; border: 1px solid #6b7588; border-top-color: #424b5d; border-radius: 1px; background: linear-gradient(#3c4658 60%, #b9c0cc 60% 80%, #3c4658 80%); }
  .strip .on { width: 13px; height: 15px; margin: 0 1px 0 4px; background: linear-gradient(#dec58c, #ad883e); }
  .modes .slim { width: 11px; }
  .modes span { margin-left: 2.500px; }
  .combo { width: 103px; height: 13px; display: flex; align-items: center; justify-content: space-between; padding: 0 4px 0 3px; border: 1px solid #171c27; border-bottom-color: #718099; background: linear-gradient(#29324a, #3a4865); }
  .combo svg { width: 6px; height: 4px; }
  .axis i { width: 13px; margin-left: 2px; font: italic bold 11px/14px "Liberation Sans", sans-serif; text-align: center; }
  .axis .x { background: #d38b5b; color: #7b1012; border: 1px solid #ebb175; line-height: 12px; }
  .axis .y { color: #35b844; }
  .axis .z { color: #3276d3; }

  /* Modifier buttons at the left edge */
  .body { display: grid; grid-template-columns: 48px 1fr; min-height: 0; }
  .sidebar { padding: 8px 0 0 3px; display: flex; flex-direction: column; gap: 1.350px; background: linear-gradient(#242a36, #263044 65%, #2b3c5c 83%, #27344e 94%, #202634); }
  .tool { position: relative; width: 42px; height: 44px; flex: none; display: flex; flex-direction: column; align-items: flex-start; border: 1px solid #535f76; border-radius: 1px; background: linear-gradient(#3a4763, #4c5978 48%, #3a404d 52%, #4a505c); }
  .tool:last-child { height: 50px; }
  .tool .glyph { width: 21px; height: 21px; margin: 5px auto 0; }
  .tool > span { margin: 3.500px 0 0 2px; }
  .tool:last-child > span { margin-top: 7px; }
  .tool.center > span { align-self: center; margin-left: 0; }
  .tool.active, .command.active { background: linear-gradient(#d89b2e, #e1b557 50%, #c48c20 52%, #e2ae35); color: #3e3318; border-color: #e5bf66; }
  .corner { position: absolute; top: 2px; right: 1px; width: 7px; height: 7px; }
  .active .corner { opacity: .45; }

  /* Command ribbon */
  .main { min-width: 0; display: grid; grid-template-rows: 101px 531px 15px; }
  .ribbon { display: grid; grid-template-columns: 14px 1fr; height: 95px; }
  .grip { display: flex; flex-direction: column; align-items: center; padding-top: 1px; background: #292e39; }
  .grip em { width: 10px; height: 10px; margin-bottom: 2px; border: 1px solid #5d6980; font-size: 7px; line-height: 8px; text-align: center; }
  .grip em:nth-child(2) { transform: rotate(90deg); }
  .grip span { writing-mode: vertical-rl; font-size: 8px; letter-spacing: .08px; }
  .tabs { height: 14px; display: flex; align-items: flex-end; background: #22242a; }
  .left-button { width: 110px; align-self: flex-start; display: flex; height: 11px; align-items: center; padding: 0 0 1px 2px; background: linear-gradient(90deg, #3d4658, #34425f 55%, transparent); }
  .left-button > i { margin: 0 6px 0 8px; font-size: 6px; }
  .left-button strong { display: flex; align-items: center; width: 41px; height: 11px; gap: 3px; padding-left: 3px; font-weight: 400; color: #51421e; background: linear-gradient(#e1ac3b, #c18b1e); }
  .left-button strong .glyph { width: 11px; height: 11px; }
  .tab { height: 12px; padding: 0 6.800px 0; border: 1px solid #465064; border-bottom: 0; border-radius: 2px 2px 0 0; background: linear-gradient(#30353f, #202329); }
  .tab:last-of-type { padding-top: 0; }
  .tab.current { background: #46516a; }
  .right-button { align-self: flex-start; margin-left: auto; width: 65px; height: 11px; line-height: 9px; padding-left: 4px; background: linear-gradient(#25304a, #41506f); }
  .right-button i { font-size: 6px; margin-right: 8px; }
  .panel { height: 80px; display: flex; gap: 3.800px; padding: 2px 0 0 5px; border: 1px solid #3c4353; background: linear-gradient(92deg, #323949 34px, #262626 37px); }
  .command { position: relative; width: 25.500px; height: 41px; flex: none; display: flex; flex-direction: column; align-items: center; justify-content: space-between; padding: 4px 0 0; border: 1px solid #3b4250; background: linear-gradient(#303749, #252a33 49%, #1f2125 50%, #292c31); }
  .command.wide { width: 41px; }
  .command .glyph { width: 21px; height: 22px; }
  .command > span { line-height: 11px; }
  .submesh { width: 277px; height: 41px; margin-left: -2px; border: 1px solid #333d50; background: #272b33; }
  .submesh-title { height: 11px; text-align: center; padding-left: 8px; background: linear-gradient(#52617f, #465573); }
  .submesh-title::before { content: "▲"; float: left; font-size: 5px; margin-left: -5px; color: #e4eaf4; }
  .submesh-icons { display: flex; gap: 2.900px; padding: 0 2px; }
  .submesh-icons i { position: relative; width: 26.500px; height: 27px; display: grid; place-items: center; border: 1px solid #383f4e; background: linear-gradient(#2b3342, #20242c); }
  .submesh-icons .glyph { width: 22px; height: 22px; }

  /* Viewports */
  .workspace { display: grid; grid-template-columns: 946px 286px; height: 531px; }
  .views { display: grid; grid-template-columns: 526px 415px; grid-template-rows: 243px 285px; column-gap: 3px; row-gap: 3px; padding: 1px 0 0 1px; background: #22252d; }
  .view { min-width: 0; display: grid; grid-template-rows: 13px 1fr; padding: 0 1px 1px; }
  .view-bar { display: flex; align-items: center; padding-bottom: 1px; background: linear-gradient(#4c6290, #344466 35%, #282e3d 65%, #24272f); }
  .view-bar strong { padding: 0 2px; border: solid #65738c; border-width: 0 1px 1px 0; color: #e9edf5; font-size: 7.500px; font-weight: 600; }
  .view-bar em { width: 4px; margin: 0 5px 0 7px; font-size: 8px; }
  .view-bar > span { margin-right: 6.900px; letter-spacing: .08px; }
  .view-bar > span:last-of-type { margin-right: 0; }
  .modes-box { display: flex; gap: 1.500px; margin-left: auto; padding: 1px 0; border-left: 1px solid #6d7b92; border-bottom: 1px solid #68758b; background: linear-gradient(#35425d, #303849); }
  .modes-box .mini { width: 9.200px; height: 9px; }
  .nav { display: flex; align-items: center; width: 92px; margin: 0 2px 0 2px; border: 1px solid #252d40; }
  .nav span { margin: 0 3.600px; color: #dce2ed; }
  .nav .mini { width: 9px; height: 9px; }
  .max { width: 11px; margin-right: 3px; padding: 1px; border: 1px solid #526382; }
  .max .mini { width: 7px; height: 8px; }
  .scene { width: 100%; height: 100%; background: #c9c9c9; border: 1px solid #a7b0b5; border-top-color: #d5d8d8; font: bold 7px "Open Sans", sans-serif; }
  .scene .big { font-size: 9.500px; font-weight: 600; }
  .grid { stroke: #969c9a; stroke-width: .42; }
  .fine { stroke: #bdbfbe; stroke-width: .3; }
  .major { stroke: #727978; stroke-width: .6; fill: none; }
  .major.thin { stroke-width: .35; }
  .gizmo { fill: #ddd4b4; stroke: #cdbb7d; stroke-width: .8; }
  .large-gizmo { stroke-width: 2; }

  /* Scene nodes browser */
  .browser { display: grid; grid-template-rows: 14px 12px 283px 7px 199px 15px; padding: 0 1px 0 2px; background: #252a34; }
  .browser-title { display: flex; align-items: center; padding: 0 0 4px 2px; font-size: 7.450px; gap: 2px; background: #292d35; }
  .browser-title em { width: 9px; height: 9px; border: 1px solid #59647a; font-size: 7px; line-height: 7px; text-align: center; }
  .browser-title em:first-of-type { margin-left: auto; }
  .browser-tabs { display: flex; align-items: flex-end; background: linear-gradient(#3d5078, #34476b 60%, #262d3b); padding-left: 3px; }
  .browser-tabs span { height: 12px; padding: 0 3.600px; border: solid #526078; border-width: 1px 1px 0 0; background: #252830; color: #dce0e7; }
  .browser-tabs .current { background: #50617f; }
  .structure { margin: 0 3px 0 3px; padding: 3.500px 1px 0 2px; border: 1px solid #343b49; background: linear-gradient(92deg, #313d54 53px, #262727 55px); }
  .buttons { display: flex; gap: 3px; height: 14px; }
  .structure button { height: 12px; line-height: 10px; padding: 0 4.200px; border: 1px solid #607192; background: linear-gradient(#405071, #334260 48%, #252f46 50%, #334260); box-shadow: 0 0 0 1px #1b2335; }
  .structure .levels button { padding: 0 2.500px; }
  .structure .levels .long { padding: 0 4.200px; }
  .structure .levels .active { padding: 0 2px; background: #d69927; border-color: #e6bd64; color: #48361c; }
  .structure .drops button { width: 45px; text-align: left; padding: 0 0 0 3px; }
  .drops i { float: right; padding: 0 1px; border-left: 1px solid #5c6a82; font-size: 6px; }
  .rule { height: 14px; display: flex; align-items: center; gap: 2px; line-height: 14px; padding-bottom: 1px; }
  .rule::before, .rule::after { content: ""; height: 1px; flex: 1; background: linear-gradient(90deg, transparent, #4b5e80); }
  .rule::after { background: linear-gradient(90deg, #4b5e80, transparent); }
  .structure button:disabled { color: #10131a; border-color: #394765; background: linear-gradient(#2f3b52, #273144); }
  .structure .owner { height: 12px; display: grid; grid-template-columns: 12px 1fr; align-items: center; text-align: center; background: #293141; border: solid #394354; border-width: 1px 0; color: #090b0f; font-size: 7.500px; font-weight: 600; }
  .owner span { padding-left: 2px; }
  .owner svg { width: 11px; height: 10px; background: #3d4857; }
  .group-actions { display: grid; grid-template-columns: 106px 52px 1fr; gap: 2px; margin-top: 2px; height: 27px; }
  .structure .large { height: 27px; display: flex; align-items: center; gap: 4px; padding: 0 1px; letter-spacing: .05px; overflow: hidden; }
  .structure .large:not(.convert) { gap: 2px; letter-spacing: -.1px; }
  .large svg { width: 20px; height: 18px; }
  .small-actions { display: flex; flex-wrap: wrap; align-content: flex-start; gap: 2px 3px; }
  .close { margin-top: 2px; }
  .state-list { height: 132px; border: 1px solid #171b24; background: linear-gradient(#e5e5df, #d6d6d2 8%, #b5b5b5 55%, #989898); }
  .tree { grid-row: 5; display: grid; grid-template-columns: 271px 11px; height: 199px; background: linear-gradient(#dedfd5, #c5c6c4 12%, #a2a2a2 65%, #969696); }
  .tree ul { margin: 0; padding: 0; list-style: none; }
  .tree li { height: 13.340px; display: flex; align-items: center; color: #383b3d; font-size: 7.500px; }
  .tree u { width: 6px; height: 6px; margin: 0 6px 0 3px; line-height: 4px; text-align: center; text-decoration: none; }
  .tree .root u { border: 1px solid #504b3e; background: #eee9cf; }
  .tree li i { width: 5px; height: 5px; margin: 0 5px 0 0; background: #686868; outline: 1px solid #898989; }
  .tree .root i { background: #fff; outline-color: #fff; }
  .tree .selected { background: linear-gradient(#c4b58c, #bdad80 50%, #aa965c 53%, #b8a66d); border-bottom: 1px solid #7a693d; }
  .tree .root { background: linear-gradient(#b2ac91, #8e8972); border-bottom: 1px solid #605b46; }
  .scrollbar { display: flex; flex-direction: column; align-items: center; justify-content: space-between; background: #f4f4f4; color: #333; }
  .scrollbar span { font-size: 9px; line-height: 12px; }
  .scrollbar span:last-child { line-height: 7px; padding-bottom: 5px; }
  .scrollbar div { width: 11px; height: 103px; margin-top: 72px; background: #cacaca; }
  .tree-bar { grid-row: 6; display: flex; align-items: center; padding: 0 0 1px 8px; background: linear-gradient(#29303f, #3a4252); }
  .tree-bar span { margin: 0 6px 0 4.200px; }
  .tree-bar span:last-of-type { margin-right: 6px; }
  .tree-bar span ~ .mini:nth-last-child(-n+3) { margin-left: 5px; }

  /* Bottom bars */
  .messages { padding: 2px 0 0 2px; background: #20242b; }
  .messages span { display: block; width: 64px; height: 13px; padding: 1px 4px; background: linear-gradient(#405276, #34456a); }
  .status { display: flex; align-items: center; padding: 0 22px 0 2px; background: linear-gradient(90deg, #27324a 50px, #191a1c 70px); font-size: 7.350px; }
  .flags { margin-left: auto; display: flex; align-items: center; gap: 4px; }
  .flags > span { font-size: 7.200px; }
  .flags b { height: 10px; line-height: 8px; padding: 0 6px; color: #eef2fa; font-size: 6.900px; font-weight: 600; border: 1px solid #49618e; }
  .flags .sel { background: #1f3e83; }
  .flags .auto { padding: 0 2px; background: #b57923; color: #47310d; border-color: #8d692b; }
  .flags .pivot { padding: 0 3px 0 12px; background: linear-gradient(90deg, #f01c26 9px, #8a4252 11px, #415b90 18px); }
  .flags svg { width: 11px; height: 11px; margin: 0 0 0 2px; }

  .taskbar { display: flex; align-items: center; background: #1b1b1b; color: #eee; }
  .start { width: 32px; display: grid; place-items: center; }
  .start svg { width: 11px; height: 11px; }
  .search { width: 230px; height: 25px; display: flex; align-items: center; gap: 6px; padding-left: 8px; border: 1px solid #484848; background: #303030; color: #bbb; font-size: 9.300px; }
  .search svg { width: 12px; height: 12px; }
  .task-view { width: 32px; display: grid; place-items: center; }
  .task-view svg { width: 12px; height: 12px; }
  .app-button { width: 32.700px; height: 25px; display: grid; place-items: center; background: linear-gradient(#aeb2b5, #aeb2b5) center bottom / 27px 0 no-repeat; }
  .app-button svg { width: 15px; height: 15px; }
  .app-button.open { background-size: 27px 1.500px; }
  .app-button.focused { background-color: #484848; background-size: 100% 1.500px; }
  .tray { margin-left: auto; display: flex; align-items: center; padding-right: 3px; font-size: 7.700px; }
  .tray-icons { width: 60px; height: 12px; margin-right: 5px; }
  .clock { width: 33px; margin-left: 7px; display: flex; flex-direction: column; align-items: center; overflow: hidden; line-height: 11.500px; }
  .tray i { width: 20px; height: 20px; display: grid; place-items: center; border: 1px solid #3c4043; border-radius: 3px; background: #252729; }
  .tray i svg { width: 13px; height: 14px; }
  .tray .cast { margin-left: 3px; background: #27311f; }
</style>
